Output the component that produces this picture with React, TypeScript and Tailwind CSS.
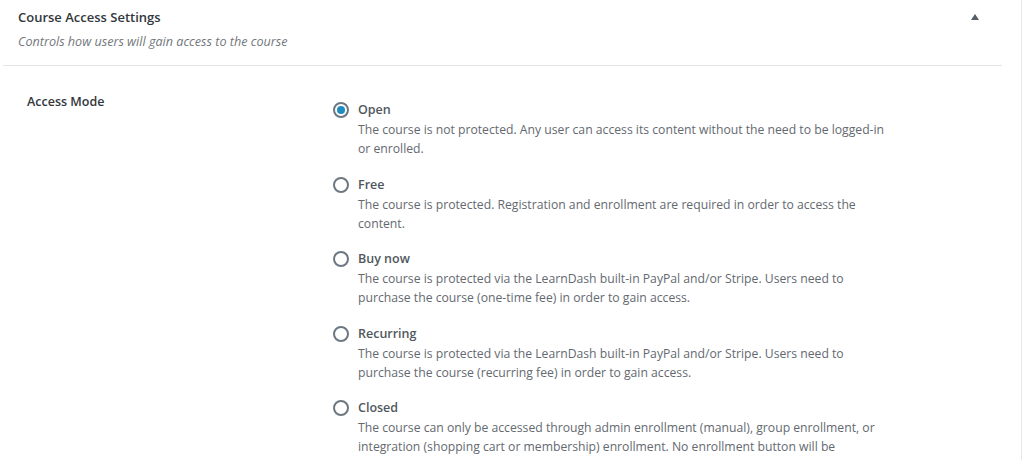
const opcoes = [
  {
    id: "open",
    nome: "Open",
    texto:
      "The course is not protected. Any user can access its content without the need to be logged-in or enrolled.",
  },
  {
    id: "free",
    nome: "Free",
    texto:
      "The course is protected. Registration and enrollment are required in order to access the content.",
  },
  {
    id: "buynow",
    nome: "Buy now",
    texto:
      "The course is protected via the LearnDash built-in PayPal and/or Stripe. Users need to purchase the course (one-time fee) in order to gain access.",
  },
  {
    id: "recurring",
    nome: "Recurring",
    texto:
      "The course is protected via the LearnDash built-in PayPal and/or Stripe. Users need to purchase the course (recurring fee) in order to gain access.",
  },
  {
    id: "closed",
    nome: "Closed",
    texto:
      "The course can only be accessed through admin enrollment (manual), group enrollment, or integration (shopping cart or membership) enrollment. No enrollment button will be displayed, unless a URL is set (optional).",
  },
];

function Radio({ marcado }: { marcado: boolean }) {
  return (
    <span className="flex h-4 w-4 shrink-0 items-center justify-center rounded-full border-2 border-[#6c7781] bg-white">
      {marcado ? <span className="h-2 w-2 rounded-full bg-[#1e8cbe]" /> : null}
    </span>
  );
}

export default function App() {
  return (
    <div className="h-[460px] w-full overflow-hidden bg-white font-['Open_Sans',sans-serif]">
      <div className="h-full w-[1022px] border-r border-[#e8e8e8]">
        <div className="flex items-start justify-between pt-[8px] pl-[18px] pr-[42px]">
          <div>
            <h2 className="text-[13px] leading-[19px] font-semibold text-[#32373c]">
              Course Access Settings
            </h2>
            <p className="mt-[6px] text-[12.6px] leading-[17px] italic text-[#72777c]">
              Controls how users will gain access to the course
            </p>
          </div>
          <svg width="8" height="6" viewBox="0 0 8 6" className="mt-[6px]">
            <path d="M4 0 L8 6 L0 6 Z" fill="#555d66" />
          </svg>
        </div>
        <div className="mt-[15px] ml-[3px] mr-[19px] border-t border-[#e2e4e7]" />

        <div className="flex pt-[26px]">
          <div className="w-[333px] pl-[27px] text-[12.5px] leading-[19px] font-semibold text-[#32373c]">
            Access Mode
          </div>
          <div className="flex flex-col gap-[16.5px] pt-[8px]">
            {opcoes.map((o, i) => (
              <div key={o.id} className="flex items-start gap-[9px]">
                <span className="mt-[2px]">
                  <Radio marcado={i === 0} />
                </span>
                <div className="w-[532px]">
                  <div className="text-[12.5px] leading-[20px] font-semibold text-[#50575e]">
                    {o.nome}
                  </div>
                  <p className="text-[12.2px] leading-[19px] text-[#646970]">
                    {o.texto}
                  </p>
                </div>
              </div>
            ))}
          </div>
        </div>
      </div>
    </div>
  );
}
